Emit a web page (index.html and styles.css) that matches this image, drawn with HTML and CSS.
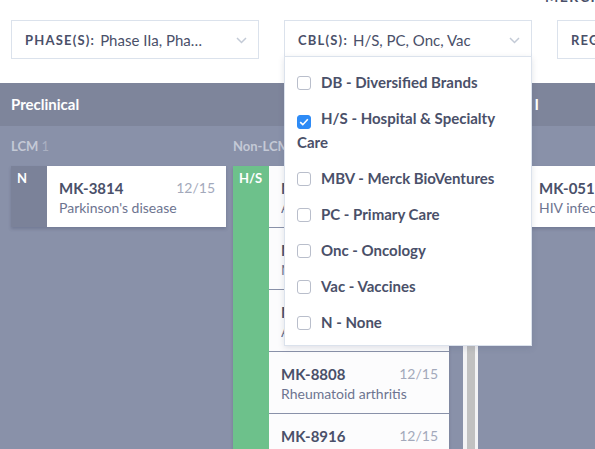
FILE: index.html
```html
<!DOCTYPE html>
<html>
<head>
<meta charset="utf-8">
<link rel="stylesheet" href="styles.css">
</head>
<body>
<div class="page">
  <div class="topline"><span class="top-label">MERCK BUSINESS</span></div>
  <div class="filters">
    <div class="filter">
      <span class="f-key">PHASE(S):</span><span class="f-val">Phase IIa, Pha…</span>
      <svg class="chev" width="11" height="7" viewBox="0 0 11 7"><path d="M1 1l4.5 4.5L10 1" fill="none" stroke="#c3cad6" stroke-width="1.5"/></svg>
    </div>
    <div class="filter open">
      <span class="f-key">CBL(S):</span><span class="f-val">H/S, PC, Onc, Vac</span>
      <svg class="chev" width="11" height="7" viewBox="0 0 11 7"><path d="M1 1l4.5 4.5L10 1" fill="none" stroke="#c3cad6" stroke-width="1.5"/></svg>
      <div class="menu">
        <label class="opt"><span class="cb"></span>DB - Diversified Brands</label>
        <label class="opt"><span class="cb on"><svg width="10" height="8" viewBox="0 0 10 8"><path d="M1.2 4.2l2.6 2.5L8.8 1.3" fill="none" stroke="#fff" stroke-width="1.6"/></svg></span>H/S - Hospital &amp; Specialty Care</label>
        <label class="opt"><span class="cb"></span>MBV - Merck BioVentures</label>
        <label class="opt"><span class="cb"></span>PC - Primary Care</label>
        <label class="opt"><span class="cb"></span>Onc - Oncology</label>
        <label class="opt"><span class="cb"></span>Vac - Vaccines</label>
        <label class="opt"><span class="cb"></span>N - None</label>
      </div>
    </div>
    <div class="filter">
      <span class="f-key">REGION:</span><span class="f-val">All</span>
    </div>
  </div>

  <div class="board">
    <div class="phase">
      <div class="phase-head">Preclinical</div>
      <div class="phase-body">
        <div class="lane lcm">
          <div class="lane-label">LCM <span class="cnt">1</span></div>
          <div class="group">
            <div class="strip">N</div>
            <div class="cards">
              <div class="card"><div class="c-top"><span class="c-id">MK-3814</span><span class="c-date">12/15</span></div><div class="c-sub">Parkinson's disease</div></div>
            </div>
          </div>
        </div>
        <div class="lane nonlcm">
          <div class="lane-label">Non-LCM <span class="cnt">5</span></div>
          <div class="group tall">
            <div class="strip green">H/S</div>
            <div class="cards">
              <div class="card"><div class="c-top"><span class="c-id">MK-1654</span><span class="c-date">12/15</span></div><div class="c-sub">Antibacterial</div></div>
              <div class="card"><div class="c-top"><span class="c-id">MK-7264</span><span class="c-date">12/15</span></div><div class="c-sub">Migraine</div></div>
              <div class="card"><div class="c-top"><span class="c-id">MK-8189</span><span class="c-date">12/15</span></div><div class="c-sub">Antiviral</div></div>
              <div class="card"><div class="c-top"><span class="c-id">MK-8808</span><span class="c-date">12/15</span></div><div class="c-sub">Rheumatoid arthritis</div></div>
              <div class="card"><div class="c-top"><span class="c-id">MK-8916</span><span class="c-date">12/15</span></div><div class="c-sub">Psoriasis</div></div>
            </div>
          </div>
        </div>
        <div class="scroll"><div class="thumb"></div></div>
      </div>
    </div>
    <div class="phase">
      <div class="phase-head">Phase I</div>
      <div class="phase-body">
        <div class="lane lcm">
          <div class="lane-label">LCM <span class="cnt">1</span></div>
          <div class="group">
            <div class="strip">N</div>
            <div class="cards">
              <div class="card"><div class="c-top"><span class="c-id">MK-0518</span><span class="c-date">12/15</span></div><div class="c-sub">HIV infection</div></div>
            </div>
          </div>
        </div>
      </div>
    </div>
  </div>
</div>
</body>
</html>
```

FILE: styles.css
```css
* { box-sizing: border-box; }
html, body { margin: 0; padding: 0; }
body {
  width: 595px;
  height: 449px;
  overflow: hidden;
  background: #fff;
  font-family: "Lato", "Liberation Sans", sans-serif;
  color: #4a5069;
}
.page { width: 595px; }

.topline {
  height: 20px;
  display: flex;
  justify-content: flex-end;
  overflow: hidden;
}
.top-label {
  margin-top: -11px;
  width: 50px;
  white-space: nowrap;
  font-size: 14px;
  font-weight: 700;
  letter-spacing: 1.5px;
  color: #4a5069;
  line-height: 16px;
}

.filters {
  display: flex;
  gap: 25px;
  padding-left: 11px;
  height: 63px;
}
.filter {
  position: relative;
  flex: 0 0 248px;
  height: 39px;
  border: 1px solid #dbe2ec;
  display: flex;
  align-items: center;
  padding: 0 13px;
  white-space: nowrap;
  font-size: 15px;
}
.f-key {
  font-size: 13px;
  font-weight: 700;
  letter-spacing: 1.2px;
  margin-right: 5px;
}
.f-val { color: #4a5069; }
.chev { position: absolute; right: 11px; top: 16px; }

.menu {
  position: absolute;
  z-index: 5;
  left: -1px;
  top: 35px;
  width: 248px;
  background: #fff;
  border: 1px solid #dbe2ec;
  box-shadow: 0 2px 6px rgba(60, 70, 100, 0.15);
  padding: 7px 12px 5px 12px;
  white-space: normal;
}
.opt {
  display: block;
  padding: 6px 0;
  line-height: 24px;
  font-size: 15px;
  font-weight: 700;
  color: #4a5069;
}
.cb {
  display: inline-flex;
  align-items: center;
  justify-content: center;
  width: 14px;
  height: 14px;
  border: 1px solid #b9becb;
  border-radius: 3px;
  margin-right: 10px;
  vertical-align: -2px;
  background: #fff;
}
.cb.on { background: #2e8bf6; border-color: #2e8bf6; }

.board {
  display: flex;
  background: #8991a9;
  min-height: 400px;
}
.phase { flex: 0 0 480px; }
.phase + .phase { flex: 1 0 auto; }
.phase-head {
  height: 43px;
  background: #7e859b;
  color: #fff;
  font-weight: 700;
  font-size: 15px;
  line-height: 43px;
  padding-left: 11px;
}
.phase-body {
  display: flex;
  padding-left: 11px;
}
.lane.lcm { flex: 0 0 215px; margin-right: 7px; }
.lane.nonlcm { flex: 0 0 216px; margin-right: 14px; }
.lane-label {
  height: 40px;
  line-height: 40px;
  font-size: 13px;
  font-weight: 700;
  color: #c4c9d6;
  white-space: nowrap;
}
.cnt { font-weight: 400; color: #aab0c2; }

.group {
  display: flex;
  box-shadow: 0 2px 3px rgba(50, 60, 90, 0.25);
}
.group.tall { min-height: 300px; }
.strip {
  flex: 0 0 36px;
  background: #7b8299;
  color: #fff;
  font-weight: 700;
  font-size: 13px;
  padding: 2px 0 0 6px;
  line-height: 20px;
}
.strip.green { background: #6dc18b; }
.cards { flex: 1; display: flex; flex-direction: column; gap: 1px; background: #8991a9; }
.card {
  background: #fff;
  height: 61px;
  padding: 12px 11px 0 12px;
}
.lane.nonlcm .card { background: #fcfcfd; }
.c-top { display: flex; justify-content: space-between; line-height: 20px; }
.c-id { font-weight: 700; font-size: 15px; color: #4a5069; }
.c-date { font-size: 14px; color: #a3a9bb; }
.c-sub { font-size: 14px; line-height: 20px; color: #6d7490; white-space: nowrap; overflow: hidden; }

.scroll {
  margin-top: 40px;
  flex: 0 0 15px;
  height: 300px;
  background: #f3f3f5;
  padding: 0 3px 0 4px;
}
.thumb { height: 100%; background: #c1c1c1; }
```
